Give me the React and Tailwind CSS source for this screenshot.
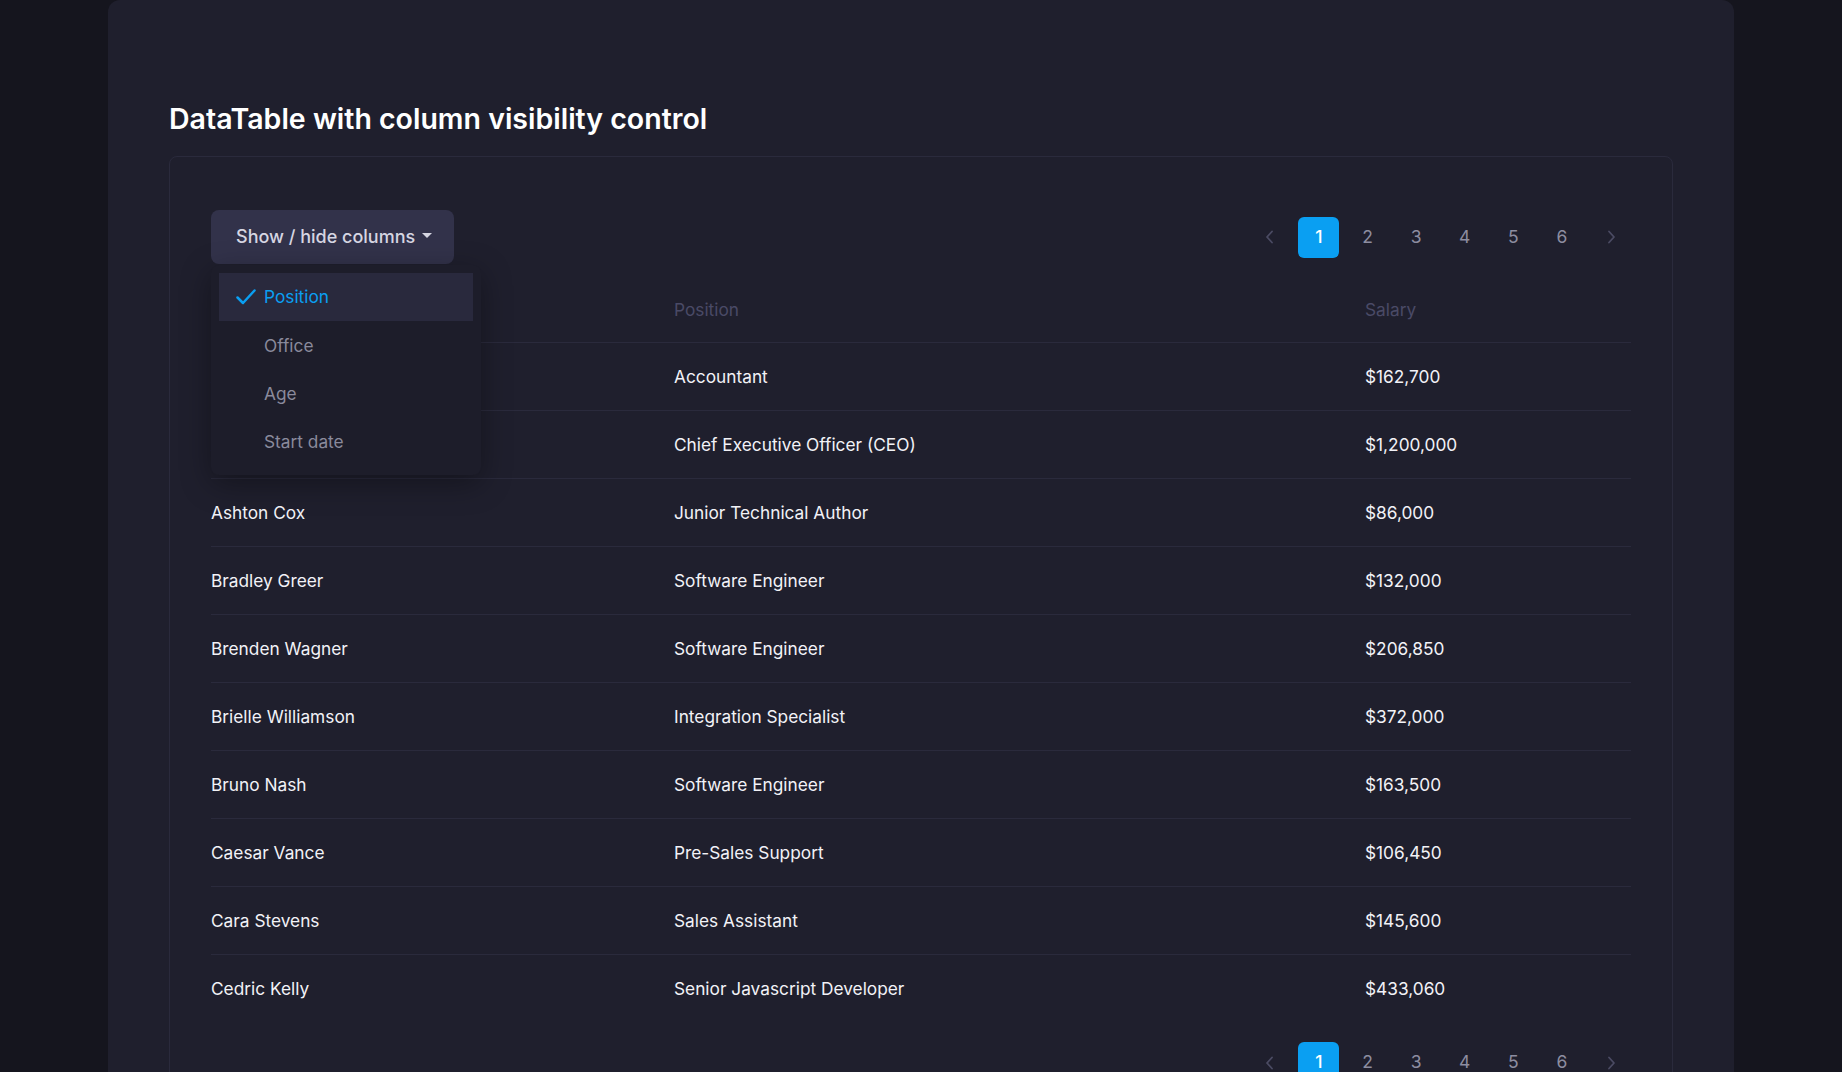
import React from 'react';

const rows = [
  ['Airi Satou', 'Accountant', '$162,700'],
  ['Angelica Ramos', 'Chief Executive Officer (CEO)', '$1,200,000'],
  ['Ashton Cox', 'Junior Technical Author', '$86,000'],
  ['Bradley Greer', 'Software Engineer', '$132,000'],
  ['Brenden Wagner', 'Software Engineer', '$206,850'],
  ['Brielle Williamson', 'Integration Specialist', '$372,000'],
  ['Bruno Nash', 'Software Engineer', '$163,500'],
  ['Caesar Vance', 'Pre-Sales Support', '$106,450'],
  ['Cara Stevens', 'Sales Assistant', '$145,600'],
  ['Cedric Kelly', 'Senior Javascript Developer', '$433,060'],
];

const columns = [
  { label: 'Position', checked: true },
  { label: 'Office' },
  { label: 'Age' },
  { label: 'Start date' },
];

const Chevron = ({ dir }) => (
  <svg width="10" height="14" viewBox="0 0 10 14" fill="none">
    <path
      d={dir === 'left' ? 'M7 1.5 L2 7 L7 12.5' : 'M3 1.5 L8 7 L3 12.5'}
      stroke="currentColor"
      strokeWidth="1.8"
      strokeLinecap="round"
      strokeLinejoin="round"
    />
  </svg>
);

const Pagination = () => (
  <div className="flex items-center gap-[7.6px]">
    <button className="w-[41px] h-[41px] flex items-center justify-center text-[#4b4b63]">
      <Chevron dir="left" />
    </button>
    {[1, 2, 3, 4, 5, 6].map((n) => (
      <button
        key={n}
        className={
          n === 1
            ? 'w-[41px] h-[41px] rounded-md bg-[#0a9ff2] text-white text-[17.5px] font-medium'
            : 'w-[41px] h-[41px] rounded-md text-[#8d8da0] text-[17.5px]'
        }
      >
        {n}
      </button>
    ))}
    <button className="w-[41px] h-[41px] flex items-center justify-center text-[#4b4b63]">
      <Chevron dir="right" />
    </button>
  </div>
);

export default function App() {
  return (
    <div
      className="h-screen overflow-hidden bg-[#15151e]"
      style={{ fontFamily: 'Inter, "Noto Sans", sans-serif' }}
    >
      <div className="w-[1626px] mx-auto bg-[#1f1f2d] rounded-t-xl px-[61px] pt-[102px] pb-10">
        <h1 className="text-[28.5px] leading-[34px] font-semibold text-white">
          DataTable with column visibility control
        </h1>

        <div className="mt-[20px] border border-[#2a2a3c] rounded-lg pl-[41px] pr-[41px] pt-[53px] pb-10">
          {/* toolbar */}
          <div className="flex items-center justify-between h-[54px]">
            <div className="relative">
              <button className="h-[54px] w-[243px] rounded-lg bg-[#32324a] text-[#d6d6e2] text-[18px] font-medium flex items-center pl-[25px] pb-[2px] gap-[7px]">
                Show / hide columns
                <svg width="10" height="6" viewBox="0 0 10 6">
                  <path d="M0 0 H10 L5 5 Z" fill="currentColor" />
                </svg>
              </button>

              <div className="absolute z-10 left-0 top-[55px] w-[270px] rounded-lg bg-[#1d1d2a] p-2 shadow-[0_8px_30px_rgba(0,0,0,0.35)]">
                {columns.map((c) => (
                  <div
                    key={c.label}
                    className={
                      c.checked
                        ? 'h-[48.4px] flex items-center pl-[17px] bg-[#29293d] text-[#0a9ff2] text-[17.3px]'
                        : 'h-[48.4px] flex items-center pl-[17px] text-[#8a8a9c] text-[17.3px]'
                    }
                  >
                    <span className="w-[28px] flex items-center">
                      {c.checked && (
                        <svg width="20" height="16" viewBox="0 0 20 16" fill="none">
                          <path
                            d="M1.5 8.5 L7 14 L18.5 1.5"
                            stroke="currentColor"
                            strokeWidth="2.5"
                            strokeLinecap="round"
                            strokeLinejoin="round"
                          />
                        </svg>
                      )}
                    </span>
                    {c.label}
                  </div>
                ))}
              </div>
            </div>
            <Pagination />
          </div>

          {/* table */}
          <div className="mt-[11px]">
            <div className="grid grid-cols-[463px_691px_1fr] h-[68px] items-center pt-[2px] border-b border-[#2a2a3c] text-[17.3px] text-[#4a4a66]">
              <div>Name</div>
              <div>Position</div>
              <div>Salary</div>
            </div>
            {rows.map((r, i) => (
              <div
                key={r[0]}
                className={
                  i === rows.length - 1
                    ? 'grid grid-cols-[463px_691px_1fr] h-[68px] items-center text-[17.3px] text-[#f2f2f7]'
                    : 'grid grid-cols-[463px_691px_1fr] h-[68px] items-center border-b border-[#2a2a3c] text-[17.3px] text-[#f2f2f7]'
                }
              >
                <div>{r[0]}</div>
                <div>{r[1]}</div>
                <div>{r[2]}</div>
              </div>
            ))}
          </div>

          <div className="mt-[19px] flex justify-end">
            <Pagination />
          </div>
        </div>
      </div>
    </div>
  );
}
